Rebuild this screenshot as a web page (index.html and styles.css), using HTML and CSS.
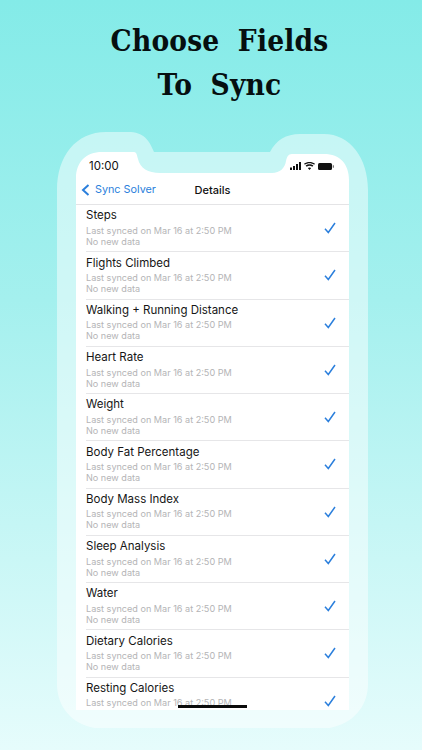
FILE: index.html
```html
<!DOCTYPE html>
<html lang="en">
<head>
<meta charset="utf-8">
<title>Choose Fields To Sync</title>
<link rel="stylesheet" href="styles.css">
</head>
<body>
<h1 class="title">Choose Fields<br>To Sync</h1>
<div class="device">
  <svg class="device-art" width="312" height="596" viewBox="0 0 312 596" aria-hidden="true">
    <path class="frame" d="M1 58C1 24 20 0 50 0H72C88 0 93 8 98 20H214C220 8 230 2 244 2H268C294 2 312 26 312 58V552C312 578 292 597 262 597H50C20 597 1 578 1 552Z"/>
    <path class="glass" d="M20 46C20 30 30 20 46 20H78C81 20 81 24 82 27C84 36 92 41 104 41H216C224 41 229 36 230 29C231 25 232 22 236 22H268C284 22 293 32 293 48V578H20Z"/>
  </svg>
  <div class="screen">
    <div class="status">
      <span class="time">10:00</span>
      <span class="status-icons">
        <svg width="11" height="8" viewBox="0 0 11 8"><rect x="0" y="5.5" width="2" height="2.5" fill="#111"/><rect x="3" y="4" width="2" height="4" fill="#111"/><rect x="6" y="2" width="2" height="6" fill="#111"/><rect x="9" y="0" width="2" height="8" fill="#111"/></svg>
        <svg width="11" height="8" viewBox="0 0 11 8"><path d="M5.5 8 3.8 6C4.8 5.2 6.200 5.200 7.200 6ZM2.700 4.800 1.600 3.600C3.800 1.800 7.200 1.800 9.400 3.600L8.300 4.800C6.700 3.500 4.300 3.500 2.700 4.800ZM.9 2.800 0 1.800C3.100-.6 7.900-.6 11 1.800L10.100 2.800C7.500.8 3.500.8.900 2.800Z" fill="#111"/></svg>
        <svg width="16" height="7" viewBox="0 0 16 7"><rect width="14" height="7" rx="1.500" fill="#111"/><rect x="14.700" y="2.300" width="1.300" height="2.400" fill="#777"/></svg>
      </span>
    </div>
    <div class="nav">
      <span class="back">
        <svg width="9" height="12" viewBox="0 0 9 12"><path d="M7.500 1 2 6l5.500 5" fill="none" stroke="#2b7fdc" stroke-width="2"/></svg>
        Sync Solver
      </span>
      <span class="nav-title">Details</span>
    </div>
    <ul class="list">
      <li class="row"><div class="info"><div class="name">Steps</div><div class="meta">Last synced on Mar 16 at 2:50 PM</div><div class="meta">No new data</div></div><svg class="check" width="12" height="12" viewBox="0 0 12 12"><path d="M1 6.800 4.300 10.500 11 1" fill="none" stroke="#2b7fdc" stroke-width="1.500"/></svg></li>
      <li class="row"><div class="info"><div class="name">Flights Climbed</div><div class="meta">Last synced on Mar 16 at 2:50 PM</div><div class="meta">No new data</div></div><svg class="check" width="12" height="12" viewBox="0 0 12 12"><path d="M1 6.800 4.300 10.500 11 1" fill="none" stroke="#2b7fdc" stroke-width="1.500"/></svg></li>
      <li class="row"><div class="info"><div class="name">Walking + Running Distance</div><div class="meta">Last synced on Mar 16 at 2:50 PM</div><div class="meta">No new data</div></div><svg class="check" width="12" height="12" viewBox="0 0 12 12"><path d="M1 6.800 4.300 10.500 11 1" fill="none" stroke="#2b7fdc" stroke-width="1.500"/></svg></li>
      <li class="row"><div class="info"><div class="name">Heart Rate</div><div class="meta">Last synced on Mar 16 at 2:50 PM</div><div class="meta">No new data</div></div><svg class="check" width="12" height="12" viewBox="0 0 12 12"><path d="M1 6.800 4.300 10.500 11 1" fill="none" stroke="#2b7fdc" stroke-width="1.500"/></svg></li>
      <li class="row"><div class="info"><div class="name">Weight</div><div class="meta">Last synced on Mar 16 at 2:50 PM</div><div class="meta">No new data</div></div><svg class="check" width="12" height="12" viewBox="0 0 12 12"><path d="M1 6.800 4.300 10.500 11 1" fill="none" stroke="#2b7fdc" stroke-width="1.500"/></svg></li>
      <li class="row"><div class="info"><div class="name">Body Fat Percentage</div><div class="meta">Last synced on Mar 16 at 2:50 PM</div><div class="meta">No new data</div></div><svg class="check" width="12" height="12" viewBox="0 0 12 12"><path d="M1 6.800 4.300 10.500 11 1" fill="none" stroke="#2b7fdc" stroke-width="1.500"/></svg></li>
      <li class="row"><div class="info"><div class="name">Body Mass Index</div><div class="meta">Last synced on Mar 16 at 2:50 PM</div><div class="meta">No new data</div></div><svg class="check" width="12" height="12" viewBox="0 0 12 12"><path d="M1 6.800 4.300 10.500 11 1" fill="none" stroke="#2b7fdc" stroke-width="1.500"/></svg></li>
      <li class="row"><div class="info"><div class="name">Sleep Analysis</div><div class="meta">Last synced on Mar 16 at 2:50 PM</div><div class="meta">No new data</div></div><svg class="check" width="12" height="12" viewBox="0 0 12 12"><path d="M1 6.800 4.300 10.500 11 1" fill="none" stroke="#2b7fdc" stroke-width="1.500"/></svg></li>
      <li class="row"><div class="info"><div class="name">Water</div><div class="meta">Last synced on Mar 16 at 2:50 PM</div><div class="meta">No new data</div></div><svg class="check" width="12" height="12" viewBox="0 0 12 12"><path d="M1 6.800 4.300 10.500 11 1" fill="none" stroke="#2b7fdc" stroke-width="1.500"/></svg></li>
      <li class="row"><div class="info"><div class="name">Dietary Calories</div><div class="meta">Last synced on Mar 16 at 2:50 PM</div><div class="meta">No new data</div></div><svg class="check" width="12" height="12" viewBox="0 0 12 12"><path d="M1 6.800 4.300 10.500 11 1" fill="none" stroke="#2b7fdc" stroke-width="1.500"/></svg></li>
      <li class="row"><div class="info"><div class="name">Resting Calories</div><div class="meta">Last synced on Mar 16 at 2:50 PM</div></div><svg class="check" width="12" height="12" viewBox="0 0 12 12"><path d="M1 6.800 4.300 10.500 11 1" fill="none" stroke="#2b7fdc" stroke-width="1.500"/></svg></li>
    </ul>
    <div class="home-bar"></div>
  </div>
</div>
</body>
</html>
```
FILE: styles.css
```css
* { box-sizing: border-box; }
html, body { margin: 0; padding: 0; }
body {
  width: 422px;
  height: 750px;
  overflow: hidden;
  background: linear-gradient(180deg, #84ebe8 0%, #a4f0ee 40%, #e6fcfc 100%);
  font-family: Inter, "Liberation Sans", sans-serif;
}
.title {
  margin: 0;
  padding: 19px 0 0 17px;
  height: 132px;
  text-align: center;
  font-family: "DejaVu Serif Condensed", "DejaVu Serif", serif;
  font-stretch: condensed;
  font-weight: 700;
  font-size: 29.500px;
  line-height: 44px;
  letter-spacing: 0.2px;
  word-spacing: 9px;
  color: #060f10;
}
.device {
  position: relative;
  width: 312px;
  height: 598px;
  margin-left: 56px;
  padding: 20px 19px 18px 20px;
}
.device-art { position: absolute; left: 0; top: 0; }
.frame { fill: #ffffff; fill-opacity: .48; }
.glass { fill: #ffffff; }
.screen {
  position: relative;
  height: 558px;
  overflow: hidden;
  border-radius: 0 0 0 22px;
  display: flex;
  flex-direction: column;
}
.status {
  flex: none;
  height: 28px;
  padding: 8px 15px 0 13px;
  display: flex;
  justify-content: space-between;
  align-items: flex-start;
}
.time { font-size: 11.5px; line-height: 13px; color: #111; }
.status-icons { display: flex; align-items: center; gap: 3px; padding-top: 2px; }
.nav {
  flex: none;
  position: relative;
  height: 25px;
  border-bottom: 1px solid #e4e4e6;
  display: flex;
  align-items: center;
  justify-content: center;
  padding-bottom: 5px;
}
.back {
  position: absolute;
  left: 5px;
  top: 2px;
  display: flex;
  align-items: center;
  gap: 5px;
  font-size: 10.800px;
  line-height: 15px;
  color: #2b7fdc;
}
.nav-title { font-size: 11px; font-weight: 500; color: #111; }
.list { flex: 1; margin: 0; padding: 0 0 0 10px; list-style: none; overflow: hidden; }
.row {
  height: 47.25px;
  border-bottom: 1px solid #e6e6e8;
  padding-right: 13px;
  display: flex;
  align-items: center;
  justify-content: space-between;
}
.row:last-child { border-bottom: 0; align-items: flex-start; }
.row:last-child .info { padding: 3.300px 0 0; }
.row:last-child .check { margin-top: 17px; }
.info { min-width: 0; padding-bottom: 1px; }
.name { font-size: 11.500px; line-height: 15px; color: #161616; }
.meta { font-size: 9.100px; line-height: 11px; color: #b4b4b6; }
.name + .meta { margin-top: 1.600px; }
.check { flex: none; }
.home-bar {
  position: absolute;
  left: 102px;
  bottom: 2px;
  width: 69px;
  height: 3px;
  background: #0b0b0b;
}
```
